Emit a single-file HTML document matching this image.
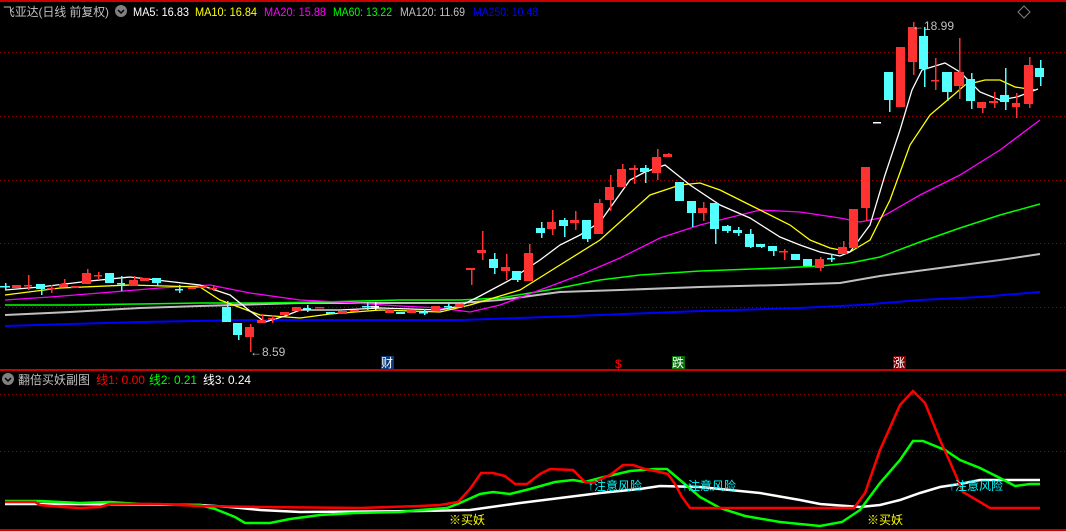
<!DOCTYPE html>
<html><head><meta charset="utf-8"><style>
html,body{margin:0;padding:0;background:#000;width:1066px;height:531px;overflow:hidden}
svg{display:block}
text{font-family:"Liberation Sans","Noto Sans CJK SC",sans-serif;font-size:12px}
</style></head><body>
<svg id="s" width="1066" height="531" viewBox="0 0 1066 531" xmlns="http://www.w3.org/2000/svg">
<rect width="1066" height="531" fill="#000"/>
<rect x="0" y="0" width="1066" height="2" fill="#c80000"/>
<rect x="0" y="369" width="1066" height="2" fill="#c80000"/>
<rect x="0" y="529" width="1066" height="2" fill="#c80000"/>
<g stroke="#a00000" stroke-width="1" stroke-dasharray="1,3">
<line x1="0" y1="52.5" x2="1066" y2="52.5"/><line x1="0" y1="116.5" x2="1066" y2="116.5"/>
<line x1="0" y1="180.5" x2="1066" y2="180.5"/><line x1="0" y1="243.5" x2="1066" y2="243.5"/>
<line x1="0" y1="307.5" x2="1066" y2="307.5"/>
<line x1="0" y1="394.5" x2="1066" y2="394.5"/><line x1="0" y1="451.5" x2="1066" y2="451.5"/>
</g>
<g fill="none" stroke-width="1.3">
<polyline stroke="#0000ff" stroke-width="2" points="5,326 70,324 140,322 250,320 400,320 460,320 520,318 600,315 700,311 800,308 860,305 920,300 980,297 1040,292"/>
<polyline stroke="#c0c0c0" stroke-width="2" points="5,315 70,312 140,308 200,306 300,303 400,303 460,303 500,300 560,292 620,290 700,287 780,285 840,283 880,276 940,268 1000,260 1040,254"/>
<polyline stroke="#00ff00" stroke-width="1.5" points="5,305 70,305 140,304 200,303 260,303 320,302 400,300 460,300 500,298 560,288 600,280 640,275 700,271 780,268 820,266 850,263 880,257 920,242 960,228 1000,215 1040,204"/>
<polyline stroke="#ff00ff" points="5,300 50,297 100,293 160,288 210,285 250,293 300,300 340,302 400,306 440,308 470,312 500,305 540,290 580,275 620,258 660,238 700,225 740,215 760,210 800,212 840,218 860,222 880,218 920,195 960,175 1000,150 1040,120"/>
<polyline stroke="#ffff00" points="5,295 60,288 130,285 200,287 220,300 260,315 300,318 330,314 380,310 440,312 470,305 520,290 560,265 600,240 650,195 680,185 700,183 720,190 750,205 790,225 810,240 830,248 850,252 870,240 890,200 910,145 930,115 950,98 965,85 985,80 1000,80 1015,87 1035,90"/>
<polyline stroke="#ffffff" points="5,290 40,287 90,281 130,277 200,285 230,295 250,311 265,322 285,316 300,310 340,310 380,308 440,310 460,306 480,296 510,280 540,260 560,245 580,235 600,222 630,180 645,172 665,165 690,185 720,205 750,218 780,237 800,245 820,252 840,256 850,252 870,225 885,175 900,130 912,90 922,70 945,63 960,72 980,92 1000,100 1017,97 1038,89"/>
</g>
<g id="c"></g>
<g fill="none" stroke-width="2.5">
<polyline stroke="#ffffff" points="5,504 60,504 200,505 230,507 260,510 300,512 420,511 470,510 520,503 560,498 600,493 640,489 660,486 700,487 760,493 800,500 820,504 860,507 880,505 900,500 920,493 940,487 960,484 980,480 1040,480"/>
<polyline stroke="#00ff00" points="5,501 40,501 60,502 80,503 110,502 140,504 200,505 215,509 235,517 245,523 270,523 290,519 320,515 355,513 400,512 420,510 447,508 460,503 480,494 493,492 510,494 530,489 555,482 573,480 585,482 600,478 630,471 655,469 667,469 680,480 700,497 720,508 745,516 780,522 820,526 842,522 860,510 880,483 900,460 913,441 923,441 945,450 960,460 980,468 1000,478 1015,486 1030,484 1040,484"/>
<polyline stroke="#ff0000" points="5,502 35,502 40,505 63,507 80,508 100,507 110,504 160,504 200,506 260,507 360,508 420,506 440,505 458,502 470,489 481,473 493,473 505,476 515,484 527,484 540,474 550,469 573,470 585,482 592,483 610,475 623,465 633,465 645,469 660,472 668,474 675,484 682,497 690,508 854,508 865,493 880,450 900,405 913,391 925,403 940,440 950,462 963,492 990,508 1040,508"/>
</g>
<g fill="#00ffff"><text x="588" y="490">↑注意风险</text><text x="682" y="490">↑注意风险</text><text x="949" y="490">↑注意风险</text></g>
<g fill="#ffff00"><text x="449" y="524">※买妖</text><text x="867" y="524">※买妖</text></g>
<g fill="#c0c0c0">
<text x="3" y="16" textLength="106" lengthAdjust="spacingAndGlyphs">飞亚达(日线 前复权)</text>
<circle cx="121" cy="11" r="6" fill="#808080"/><path d="M118 10l3 3 3-3" stroke="#000" stroke-width="1.5" fill="none"/>
<text x="133" y="16" fill="#fff" textLength="56" lengthAdjust="spacingAndGlyphs">MA5: 16.83</text>
<text x="195" y="16" fill="#ffff00" textLength="62" lengthAdjust="spacingAndGlyphs">MA10: 16.84</text>
<text x="264" y="16" fill="#ff00ff" textLength="62" lengthAdjust="spacingAndGlyphs">MA20: 15.88</text>
<text x="333" y="16" fill="#00ff00" textLength="59" lengthAdjust="spacingAndGlyphs">MA60: 13.22</text>
<text x="400" y="16" fill="#c0c0c0" textLength="65" lengthAdjust="spacingAndGlyphs">MA120: 11.69</text>
<text x="473" y="16" fill="#0000ff" textLength="65" lengthAdjust="spacingAndGlyphs">MA250: 10.48</text>
<path d="M1024 6l6 6-6 6-6-6z" fill="none" stroke="#808080"/>
<circle cx="8" cy="379" r="6" fill="#808080"/><path d="M5 378l3 3 3-3" stroke="#000" stroke-width="1.5" fill="none"/>
<text x="18" y="384" textLength="72" lengthAdjust="spacingAndGlyphs">翻倍买妖副图</text>
<text x="96" y="384" fill="#ff0000" textLength="49" lengthAdjust="spacingAndGlyphs">线1: 0.00</text>
<text x="149" y="384" fill="#00ff00" textLength="48" lengthAdjust="spacingAndGlyphs">线2: 0.21</text>
<text x="203" y="384" fill="#fff" textLength="48" lengthAdjust="spacingAndGlyphs">线3: 0.24</text>
<text x="250" y="356">←8.59</text>
<text x="912" y="30">←18.99</text>
</g>
<rect x="381" y="356" width="13" height="13" fill="#0a3a7a"/><text x="381" y="367" fill="#fff">财</text>
<text x="615" y="368" fill="#ff0000">$</text>
<rect x="672" y="356" width="13" height="13" fill="#087008"/><text x="672" y="367" fill="#fff">跌</text>
<rect x="893" y="356" width="13" height="13" fill="#800000"/><text x="893" y="367" fill="#fff">涨</text>
</svg>
<script>
var C=[
[0,10,286,287,283,290,'c'],[12,21,285,288,285,288,'r'],[24,32,285,286,275,290,'r'],[36,45,284,289,284,295,'c'],[47,55,288,289,285,293,'r'],[59,68,284,287,279,287,'r'],[71,79,286,288,286,288,'r'],[82,91,273,284,269,284,'r'],[94,102,275,276,272,280,'r'],[105,114,273,283,273,283,'c'],[117,125,283,284,276,291,'c'],[129,138,280,286,276,286,'r'],[140,149,278,281,278,281,'r'],[152,161,278,283,278,286,'c'],[175,183,289,290,285,293,'c'],[188,196,287,289,287,289,'r'],[198,207,286,288,286,288,'r'],[209,217,288,289,285,291,'r'],
[222,231,307,322,301,322,'c'],[233,242,323,335,323,340,'c'],[245,254,327,337,324,352,'r'],[257,266,320,323,314,323,'r'],[268,276,318,319,315,323,'r'],[280,289,312,315,312,315,'r'],[292,301,307,311,307,311,'r'],[303,311,308,309,305,312,'c'],[315,324,307,308,307,308,'r'],[326,335,312,314,312,314,'c'],[338,347,311,314,311,314,'r'],[350,359,310,311,310,311,'r'],[362,371,306,307,302,310,'c'],[371,379,306,307,302,310,'w'],[385,394,310,313,310,313,'r'],[396,405,312,314,312,314,'c'],[407,416,310,313,310,313,'r'],[419,428,312,313,309,315,'c'],[431,440,306,311,306,311,'r'],[444,452,306,307,303,309,'c'],[455,464,304,307,304,307,'r'],
[466,475,268,270,268,285,'r'],[477,486,250,253,231,260,'r'],[489,498,259,268,253,274,'c'],[501,510,267,271,254,280,'r'],[512,521,271,280,271,282,'c'],[524,533,253,281,244,281,'r'],[536,545,228,233,222,238,'c'],[547,556,222,229,210,235,'r'],[559,568,220,226,218,237,'c'],[570,579,220,223,211,230,'r'],[582,591,220,239,220,242,'c'],[594,603,203,234,199,234,'r'],[605,614,187,200,175,211,'r'],[617,626,169,187,164,187,'r'],[629,638,168,170,165,184,'r'],[640,649,168,172,165,183,'c'],[652,661,157,173,149,180,'r'],[663,672,154,157,153,157,'r'],[675,684,182,201,182,201,'c'],[687,696,201,213,201,227,'c'],[698,707,208,213,202,221,'r'],[710,719,203,229,203,244,'c'],[722,731,226,231,225,233,'c'],[733,742,230,233,227,236,'c'],[745,754,234,247,229,248,'c'],[756,765,244,247,244,248,'c'],[768,777,246,251,246,256,'c'],[779,788,251,252,249,260,'r'],[791,800,254,260,254,260,'c'],[803,812,259,266,259,266,'c'],[815,824,259,268,257,271,'r'],[827,835,258,259,254,262,'c'],[838,847,247,254,241,254,'r'],[849,858,209,248,209,248,'r'],[861,870,167,208,167,221,'r'],[873,881,122,123,122,123,'w'],
[884,893,72,100,72,112,'c'],[896,905,47,107,47,107,'r'],[908,917,27,62,22,75,'r'],[919,928,36,69,27,87,'c'],[931,939,80,81,58,90,'r'],[942,952,72,92,72,101,'c'],[954,964,72,86,38,99,'r'],[966,975,79,101,73,109,'c'],[977,986,102,108,102,113,'r'],[989,998,101,103,92,108,'r'],[1000,1009,95,102,68,110,'c'],[1012,1020,103,107,93,118,'r'],[1024,1033,65,104,57,108,'r'],[1035,1044,68,77,60,86,'c']];
var g=document.getElementById('c'),h='',col={r:'#ff3232',c:'#54ffff',w:'#ffffff'};
C.forEach(function(a){var f=col[a[6]],cx=Math.round((a[0]+a[1])/2);
h+='<rect x="'+cx+'" y="'+a[4]+'" width="1.5" height="'+(a[5]-a[4])+'" fill="'+f+'"/>';
h+='<rect x="'+a[0]+'" y="'+a[2]+'" width="'+(a[1]-a[0])+'" height="'+Math.max(1.5,a[3]-a[2])+'" fill="'+f+'"/>';});
g.innerHTML=h;
</script>
</body></html>
